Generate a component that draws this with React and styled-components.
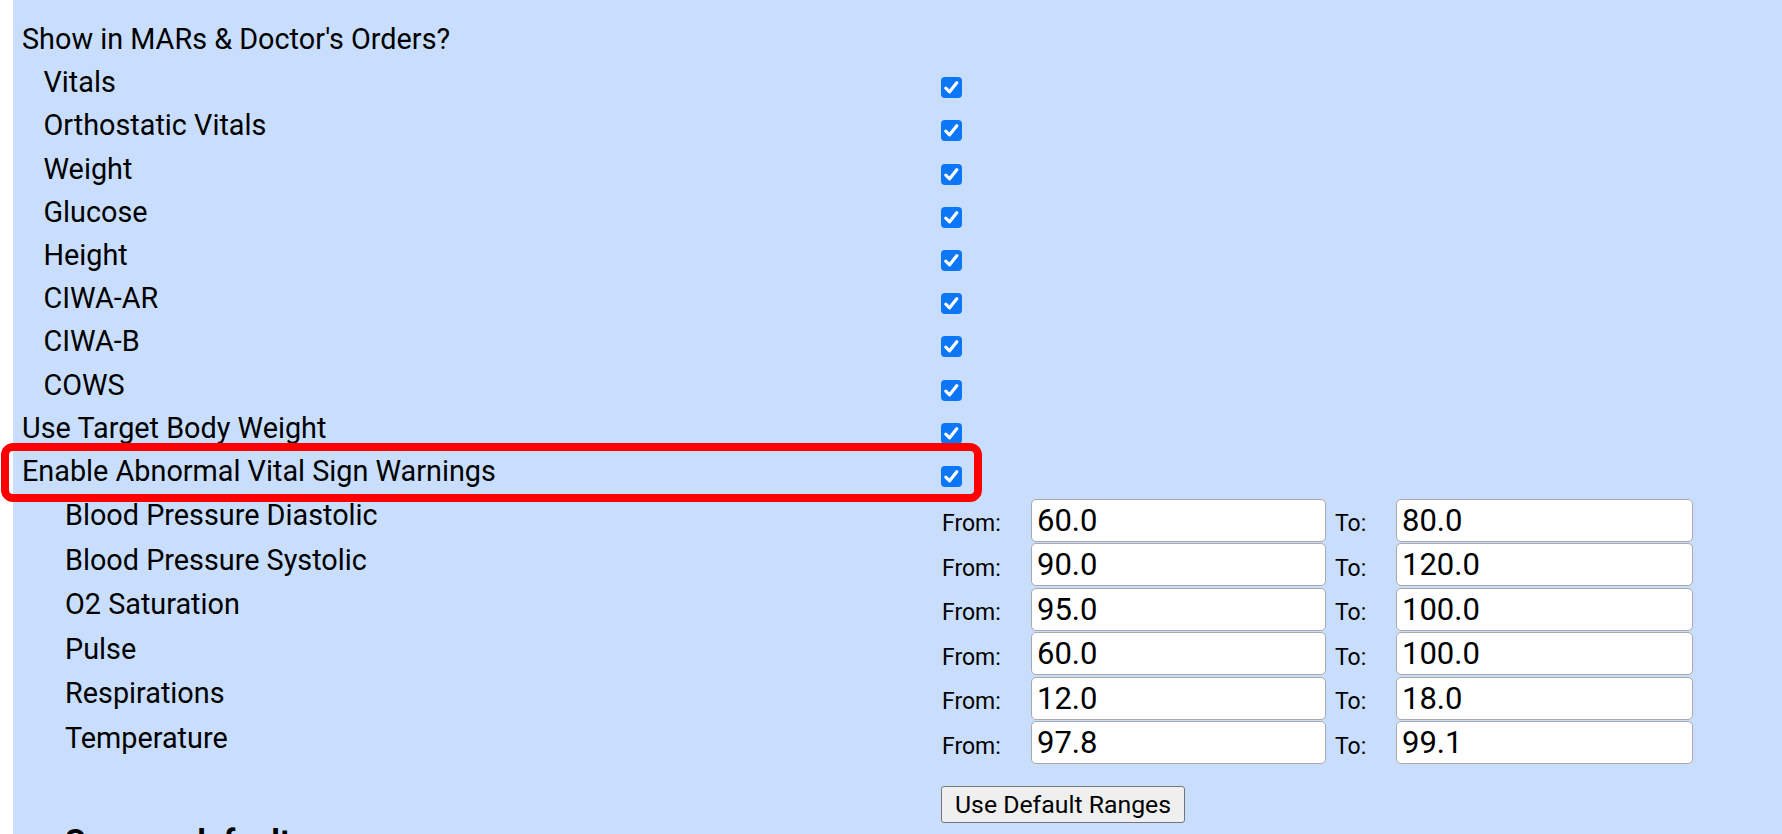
import React from 'react'
import styled, { createGlobalStyle } from 'styled-components'

const GlobalStyle = createGlobalStyle`
  html, body {
    margin: 0;
    padding: 0;
    background: #fff;
  }
  body {
    font-family: Roboto, "Liberation Sans", Arial, sans-serif;
    color: #000;
  }
`

const marRows = ['Vitals', 'Orthostatic Vitals', 'Weight', 'Glucose', 'Height', 'CIWA-AR', 'CIWA-B', 'COWS']

const ranges = [
  { name: 'Blood Pressure Diastolic', from: '60.0', to: '80.0' },
  { name: 'Blood Pressure Systolic', from: '90.0', to: '120.0' },
  { name: 'O2 Saturation', from: '95.0', to: '100.0' },
  { name: 'Pulse', from: '60.0', to: '100.0' },
  { name: 'Respirations', from: '12.0', to: '18.0' },
  { name: 'Temperature', from: '97.8', to: '99.1' },
]

const CheckIcon = () => (
  <svg width="21" height="21" viewBox="0 0 21 21">
    <path d="M4.8 11.2 L8.6 14.8 L15.8 5.8" fill="none" stroke="#fff" strokeWidth="3.2" strokeLinecap="round" strokeLinejoin="round" />
  </svg>
)

const Settings = () => {
  return <Page>
    <Panel>
      <Row>
        <Label level={0}>Show in MARs &amp; Doctor's Orders?</Label>
      </Row>
      {marRows.map((name) => (
        <Row key={name}>
          <Label level={1}>{name}</Label>
          <CheckBox><CheckIcon /></CheckBox>
        </Row>
      ))}
      <Row>
        <Label level={0}>Use Target Body Weight</Label>
        <CheckBox><CheckIcon /></CheckBox>
      </Row>
      <Row>
        <Label level={0}>Enable Abnormal Vital Sign Warnings</Label>
        <CheckBox><CheckIcon /></CheckBox>
        <Highlight />
      </Row>
      <RangeTable>
        {ranges.map((r) => (
          <RangeRow key={r.name}>
            <RangeLabel level={2}>{r.name}</RangeLabel>
            <FieldLabel>From:</FieldLabel>
            <ValueInput defaultValue={r.from} />
            <FieldLabel $to>To:</FieldLabel>
            <ValueInput defaultValue={r.to} />
          </RangeRow>
        ))}
      </RangeTable>
      <ButtonRow>
        <DefaultButton type="button">Use Default Ranges</DefaultButton>
      </ButtonRow>
      <SectionTitle>Save as default</SectionTitle>
    </Panel>
  </Page>
}

const Page = styled.div`
  padding-left: 13px;
  height: 834px;
  overflow: hidden;
`

const Panel = styled.section`
  background: #c9defc;
  min-height: 100%;
  padding-top: 18px;
  box-sizing: border-box;
`

const Row = styled.div`
  position: relative;
  display: grid;
  grid-template-columns: 928px 1fr;
  height: 43.2px;
`

const Label = styled.div`
  font-size: 28.8px;
  line-height: 43.2px;
  padding-left: ${(p) => 9 + p.level * 21.5}px;
  white-space: nowrap;
`

const CheckBox = styled.span`
  width: 21px;
  height: 21px;
  margin-top: 16px;
  border-radius: 4px;
  background: #0b76f6;
  display: flex;
  align-items: center;
  justify-content: center;
`

const Highlight = styled.span`
  position: absolute;
  left: -12px;
  top: -7px;
  width: 981px;
  height: 59px;
  border: 8px solid #fe0000;
  border-radius: 12px;
  box-sizing: border-box;
  pointer-events: none;
`

const RangeTable = styled.div`
  margin-top: 5px;
`

const RangeRow = styled.div`
  display: grid;
  grid-template-columns: 928px 90px 295px 70px 297px;
  height: 44.5px;
  align-items: center;
`

const RangeLabel = styled(Label)`
  align-self: start;
  line-height: 34px;
`

const FieldLabel = styled.span`
  align-self: start;
  margin-top: 12px;
  font-size: 23px;
  line-height: 28px;
  padding-left: ${(p) => (p.$to ? 9 : 1)}px;
`

const ValueInput = styled.input`
  box-sizing: border-box;
  width: 100%;
  height: 43px;
  margin: 0;
  padding: 0 5px;
  border: 1px solid #a9a9a9;
  border-radius: 5px;
  background: #fff;
  font-family: Roboto, "Liberation Sans", Arial, sans-serif;
  font-size: 31px;
  color: #000;
  outline: none;
`

const ButtonRow = styled.div`
  display: grid;
  grid-template-columns: 928px auto 1fr;
  margin-top: 21px;
`

const DefaultButton = styled.button`
  grid-column: 2;
  height: 37px;
  padding: 0 13px;
  border: 1px solid #767676;
  border-radius: 3px;
  background: #efefef;
  font-family: Roboto, "Liberation Sans", Arial, sans-serif;
  font-size: 24.8px;
  color: #000;
`

const SectionTitle = styled.h3`
  margin: 0;
  padding-left: 52px;
  font-size: 32.8px;
  font-weight: 700;
  line-height: normal;
`

export default function App() {
  return <>
    <GlobalStyle />
    <Settings />
  </>
}
